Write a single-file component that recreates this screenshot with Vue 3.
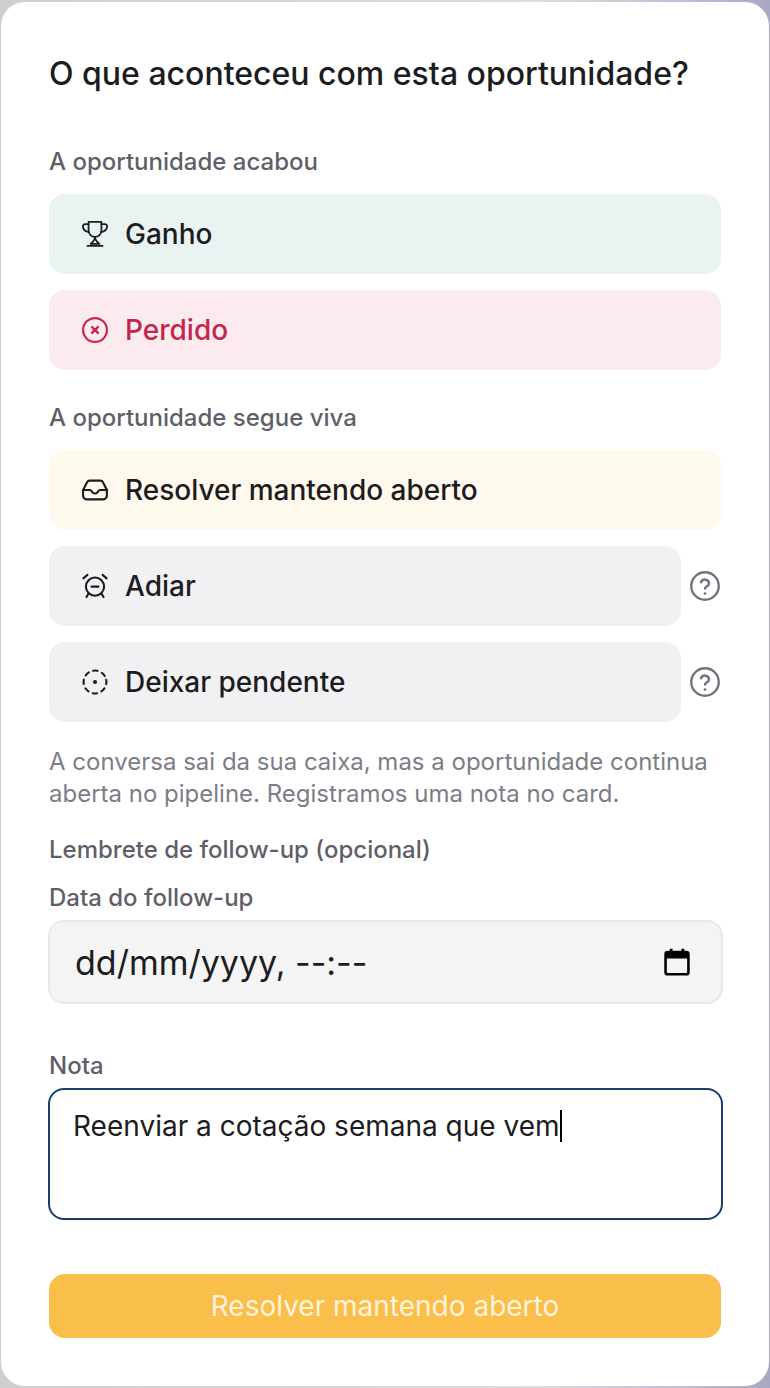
<template>
  <div class="backdrop">
    <div class="card">
      <h2 class="title">O que aconteceu com esta oportunidade?</h2>

      <p class="section-label first">A oportunidade acabou</p>
      <div class="options">
        <button class="option won">
          <svg class="icon" viewBox="0 0 24 24" fill="none" stroke="currentColor" stroke-width="1.5" stroke-linecap="round" stroke-linejoin="round">
            <path d="M6.500 1.500h11v7.500a5.500 5.500 0 0 1-11 0V1.500z" />
            <path d="M6.500 3.500H3.500A1.900 1.900 0 0 0 1.600 5.500c.2 2.600 2.200 4.500 5.400 5" />
            <path d="M17.500 3.500h3a1.900 1.900 0 0 1 1.900 2c-.2 2.600-2.200 4.500-5.400 5" />
            <path d="M12 14.500c0 2-1.500 4-3.800 6h7.600c-2.300-2-3.800-4-3.800-6z" />
            <path d="M5.500 22.200h13" />
          </svg>
          <span>Ganho</span>
        </button>
        <button class="option lost">
          <svg class="icon" viewBox="0 0 24 24" fill="none" stroke="currentColor" stroke-width="1.8" stroke-linecap="round">
            <circle cx="12" cy="12" r="10.200" />
            <path d="M9.500 9.500l5 5M14.500 9.500l-5 5" stroke-width="2" />
          </svg>
          <span>Perdido</span>
        </button>
      </div>

      <p class="section-label">A oportunidade segue viva</p>
      <div class="options">
        <button class="option keep">
          <svg class="icon" viewBox="0 0 24 24" fill="none" stroke="currentColor" stroke-width="1.8" stroke-linecap="round" stroke-linejoin="round">
            <path d="M1.800 12l3.400-6.600A2.500 2.500 0 0 1 7.500 4h9a2.500 2.500 0 0 1 2.300 1.400L22.200 12v5a3 3 0 0 1-3 3H4.800a3 3 0 0 1-3-3v-5z" />
            <path d="M1.800 12h5.700c1 0 1.500.6 2 1.500.4.800 1 1.500 2.500 1.500s2.100-.7 2.500-1.500c.5-.9 1-1.500 2-1.500h5.700" />
          </svg>
          <span>Resolver mantendo aberto</span>
        </button>
        <div class="option-row">
          <button class="option neutral">
            <svg class="icon" viewBox="0 0 24 24" fill="none" stroke="currentColor" stroke-width="1.800" stroke-linecap="round">
              <circle cx="12" cy="12.500" r="7.800" />
              <path d="M9 12.500h6M2 5.500L5.500 2.500M22 5.500L18.500 2.500M6.500 18.500l-1.800 3M17.500 18.500l1.800 3" />
            </svg>
            <span>Adiar</span>
          </button>
          <svg class="help" viewBox="0 0 24 24" fill="none" stroke="currentColor" stroke-width="1.900" stroke-linecap="round" stroke-linejoin="round">
            <circle cx="12" cy="12" r="11" />
            <path d="M8.800 9a3.300 3.300 0 0 1 6.400 1c0 2.200-3.200 2.500-3.200 4" />
            <path d="M12 18h.01" stroke-width="2.200" />
          </svg>
        </div>
        <div class="option-row">
          <button class="option neutral">
            <svg class="icon" viewBox="0 0 24 24" fill="none" stroke="currentColor" stroke-width="1.800" stroke-linecap="round">
              <circle cx="12" cy="12" r="9.800" stroke-dasharray="3.700 4" transform="rotate(-11 12 12)" />
              <circle cx="12" cy="12" r="1.800" fill="currentColor" stroke="none" />
            </svg>
            <span>Deixar pendente</span>
          </button>
          <svg class="help" viewBox="0 0 24 24" fill="none" stroke="currentColor" stroke-width="1.900" stroke-linecap="round" stroke-linejoin="round">
            <circle cx="12" cy="12" r="11" />
            <path d="M8.800 9a3.300 3.300 0 0 1 6.400 1c0 2.200-3.200 2.500-3.200 4" />
            <path d="M12 18h.01" stroke-width="2.200" />
          </svg>
        </div>
      </div>

      <p class="hint">A conversa sai da sua caixa, mas a oportunidade continua aberta no pipeline. Registramos uma nota no card.</p>

      <p class="reminder">Lembrete de follow-up (opcional)</p>

      <label class="field-label">Data do follow-up</label>
      <div class="date-input">
        <span>dd/mm/yyyy, --:--</span>
        <svg class="calendar" viewBox="0 0 24 24" fill="none">
          <path d="M7 .6v3.500M17 .6v3.500" stroke="#000" stroke-width="2.400" />
          <rect x="2.200" y="3.500" width="19.600" height="19" rx="1.800" stroke="#000" stroke-width="2.200" />
          <rect x="2.200" y="3.500" width="19.600" height="5.500" fill="#000" />
        </svg>
      </div>

      <label class="field-label note-label">Nota</label>
      <div class="note-input">Reenviar a cotação semana que vem<i class="caret"></i></div>

      <button class="submit">Resolver mantendo aberto</button>
    </div>
  </div>
</template>

<script setup>
</script>

<style>
html,
body {
  margin: 0;
  padding: 0;
}
</style>

<style scoped>
* {
  box-sizing: border-box;
}

.backdrop {
  width: 770px;
  height: 1388px;
  padding: 2px 1px;
  background: linear-gradient(90deg, #cfcfcf 0%, #dcdcdc 70%, #bcbcd8 90%, #a8a8c4 100%);
  font-family: Inter, "Noto Sans", sans-serif;
  color: #1c1c21;
  overflow: hidden;
}

.card {
  height: 1384px;
  padding: 52px 48px 0;
  background: #fff;
  border-radius: 24px;
}

.title {
  margin: 0;
  font-size: 32px;
  line-height: 40px;
  font-weight: 500;
  color: #1c1c21;
}

.section-label {
  margin: 32px 0 16px;
  font-size: 24px;
  line-height: 32px;
  font-weight: 500;
  color: #5f5f6a;
}

.section-label.first {
  margin-top: 52px;
}

.options {
  display: flex;
  flex-direction: column;
  gap: 16px;
}

.option-row {
  display: flex;
  align-items: center;
  gap: 9px;
  padding-right: 1px;
}

.option {
  display: flex;
  align-items: center;
  gap: 16px;
  width: 100%;
  height: 80px;
  padding: 0 32px;
  border: none;
  border-radius: 16px;
  font-family: inherit;
  font-size: 28px;
  font-weight: 500;
  text-align: left;
  color: #1c1c21;
}

.option-row .option {
  flex: 1;
}

.won {
  background: #e9f3f1;
}

.lost {
  background: #fbebee;
  color: #c4254a;
}

.keep {
  background: #fff8ec;
}

.neutral {
  background: #f1f1f3;
}

.icon {
  width: 28px;
  height: 28px;
  flex: none;
}

.help {
  width: 30px;
  height: 30px;
  flex: none;
  color: #71717a;
}

.hint {
  margin: 24px 0 0;
  font-size: 24px;
  line-height: 32px;
  color: #7d7d87;
}

.reminder {
  margin: 24px 0 0;
  font-size: 24px;
  line-height: 32px;
  font-weight: 500;
  color: #5f5f6a;
}

.field-label {
  display: block;
  margin: 16px 0 6px;
  font-size: 24px;
  line-height: 32px;
  font-weight: 500;
  color: #5f5f6a;
}

.date-input {
  display: flex;
  align-items: center;
  justify-content: space-between;
  width: 675px;
  height: 84px;
  margin-left: -1px;
  padding: 0 30px 0 25px;
  border: 2px solid #e8e8e8;
  border-radius: 16px;
  background: #f4f4f5;
  font-size: 34px;
  color: #1c1c21;
}

.calendar {
  width: 28px;
  height: 28px;
}

.note-label {
  margin-top: 46px;
}

.note-input {
  width: 675px;
  height: 132px;
  margin-left: -1px;
  padding: 18px 23px;
  border: 2px solid #1a3f66;
  border-radius: 16px;
  background: #fff;
  font-size: 28px;
  line-height: 36px;
  color: #1c1c21;
}

.caret {
  display: inline-block;
  width: 2px;
  height: 32px;
  background: #000;
  vertical-align: -6px;
}

.submit {
  display: block;
  width: 672px;
  height: 64px;
  margin-top: 54px;
  border: none;
  border-radius: 16px;
  background: #fabe4b;
  color: #fff3dc;
  font-family: inherit;
  font-size: 28px;
  font-weight: 400;
}
</style>
